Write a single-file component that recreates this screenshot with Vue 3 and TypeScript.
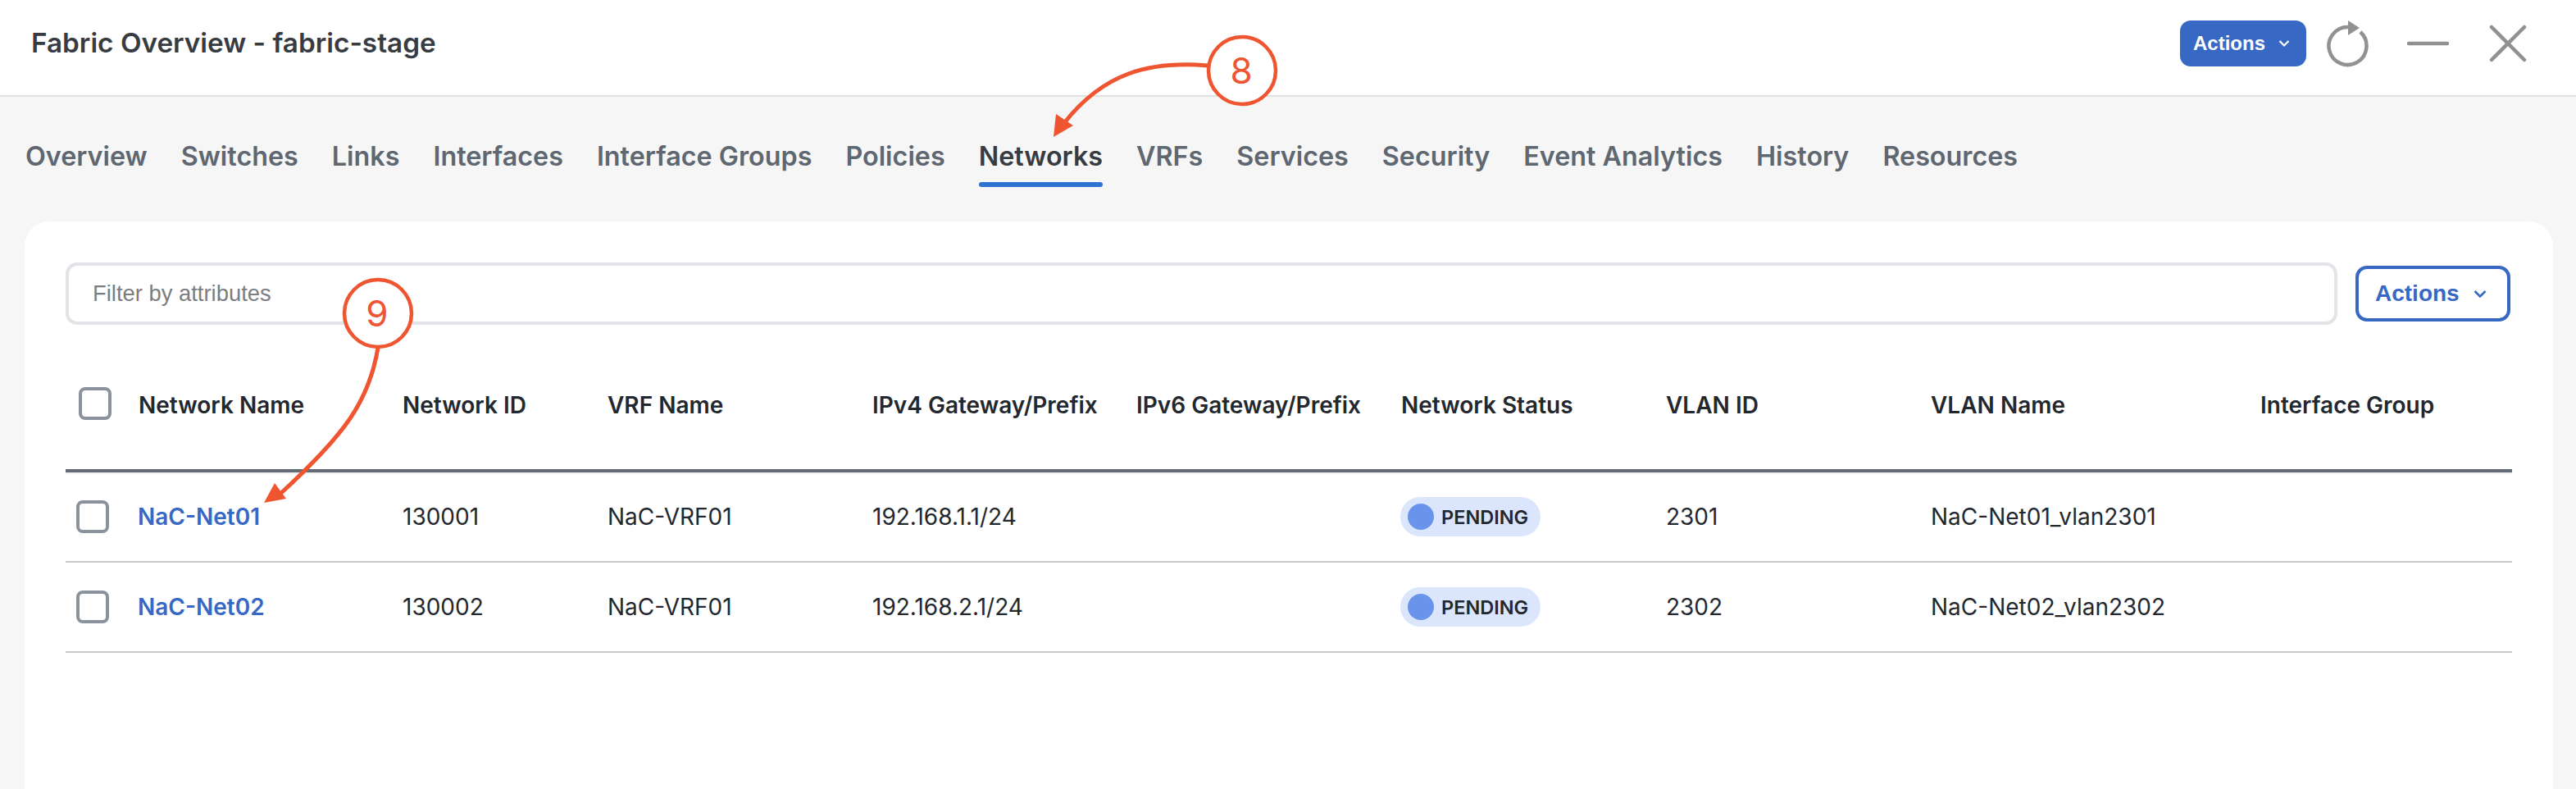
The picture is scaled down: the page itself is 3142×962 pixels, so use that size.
<script setup lang="ts">
const tabs: string[] = ['Overview','Switches','Links','Interfaces','Interface Groups','Policies','Networks','VRFs','Services','Security','Event Analytics','History','Resources']
const columns: string[] = ['Network Name','Network ID','VRF Name','IPv4 Gateway/Prefix','IPv6 Gateway/Prefix','Network Status','VLAN ID','VLAN Name','Interface Group']
interface Row { name: string; id: string; vrf: string; ipv4: string; vlan: string; vlanName: string }
const rows: Row[] = [
  { name: 'NaC-Net01', id: '130001', vrf: 'NaC-VRF01', ipv4: '192.168.1.1/24', vlan: '2301', vlanName: 'NaC-Net01_vlan2301' },
  { name: 'NaC-Net02', id: '130002', vrf: 'NaC-VRF01', ipv4: '192.168.2.1/24', vlan: '2302', vlanName: 'NaC-Net02_vlan2302' },
]
</script>

<template>
  <div class="page">
    <header class="top">
      <h1 class="title">Fabric Overview - fabric-stage</h1>
      <div class="top-tools">
        <button class="btn-solid">Actions
          <svg class="chev" width="14" height="10" viewBox="0 0 14 10"><path d="M1.5 2 L7 7.5 L12.5 2" fill="none" stroke="currentColor" stroke-width="2.2"/></svg>
        </button>
        <svg class="refresh" width="54" height="58" viewBox="0 0 54 58">
          <path d="M27 8 A23 23 0 1 0 42 14" fill="none" stroke="#919191" stroke-width="4.5"/>
          <path d="M27 0 L41 9 L27 18 Z" fill="#919191"/>
        </svg>
        <svg class="minimize" width="51" height="6" viewBox="0 0 51 6"><path d="M2 3 H49" stroke="#919191" stroke-width="4.5" stroke-linecap="round"/></svg>
        <svg class="close" width="46" height="46" viewBox="0 0 46 46"><path d="M3 3 L43 43 M43 3 L3 43" stroke="#919191" stroke-width="4.5" stroke-linecap="round"/></svg>
      </div>
    </header>

    <nav class="tabs">
      <div v-for="t in tabs" :key="t" class="tab" :class="{ active: t === 'Networks' }">{{ t }}</div>
    </nav>

    <main class="card">
      <div class="filter-row">
        <div class="filter">Filter by attributes</div>
        <button class="btn-outline">Actions
          <svg class="chev2" width="16" height="11" viewBox="0 0 16 11"><path d="M1.5 2 L8 8.5 L14.5 2" fill="none" stroke="currentColor" stroke-width="2.6"/></svg>
        </button>
      </div>

      <div class="grid head">
        <span class="check"></span>
        <span v-for="c in columns" :key="c">{{ c }}</span>
      </div>
      <div v-for="r in rows" :key="r.name" class="grid row">
        <span class="check shifted"></span>
        <a class="link">{{ r.name }}</a>
        <span>{{ r.id }}</span>
        <span>{{ r.vrf }}</span>
        <span>{{ r.ipv4 }}</span>
        <span></span>
        <span class="pill"><i class="dot"></i>PENDING</span>
        <span>{{ r.vlan }}</span>
        <span>{{ r.vlanName }}</span>
        <span></span>
      </div>
    </main>

    <svg class="annot" width="3142" height="962" viewBox="0 0 3142 962">
      <g fill="none" stroke="#ee5530" stroke-width="5">
        <path d="M1473 80 C1400 74 1345 90 1298 150"/>
        <path d="M461 424 C450 490 420 530 342 602"/>
      </g>
      <g fill="#ffffff" stroke="#ee5530" stroke-width="4.5">
        <circle cx="1515" cy="86" r="41"/>
        <circle cx="461" cy="382" r="41"/>
      </g>
      <g fill="#ee5530">
        <polygon points="1288,139 1309,153 1285,167"/>
        <polygon points="335,589 349,608 322,613"/>
      </g>
      <g fill="#ee5530" font-family="Inter, sans-serif" font-size="44" text-anchor="middle">
        <text x="1514" y="102">8</text>
        <text x="460" y="398">9</text>
      </g>
    </svg>
  </div>
</template>

<style>
html, body { margin: 0; background: #f6f6f7; }
</style>

<style scoped>
.page {
  position: relative;
  width: 3142px;
  height: 962px;
  overflow: hidden;
  background: #f6f6f7;
  font-family: Inter, sans-serif;
  display: flex;
  flex-direction: column;
}
.top {
  height: 116px;
  flex: none;
  background: #fff;
  border-bottom: 2px solid #e1e1e1;
  display: flex;
  align-items: center;
  justify-content: space-between;
  padding-left: 38px;
}
.title {
  margin: 0;
  font-size: 33.3px;
  font-weight: 600;
  color: #373c42;
  line-height: 1;
  position: relative;
  top: -5px;
}
.top-tools {
  display: flex;
  align-items: flex-start;
  height: 116px;
  padding-top: 25px;
  box-sizing: border-box;
  padding-right: 60px;
}
.btn-solid {
  width: 154px;
  height: 56px;
  background: #3668c4;
  color: #fff;
  border: none;
  border-radius: 13px;
  font: bold 24px "Liberation Sans", sans-serif;
  padding: 0 0 0 16px;
  display: flex;
  align-items: center;
  gap: 16px;
}
.refresh { margin-left: 24px; margin-top: 0; }
.minimize { margin-left: 45px; margin-top: 25px; }
.close { margin-left: 49px; margin-top: 5px; }
.tabs {
  flex: none;
  display: flex;
  gap: 41px;
  padding: 55px 0 0 31px;
  height: 55px;
  margin-bottom: 42px;
}
.tab {
  position: relative;
  font-size: 32.3px;
  font-weight: 600;
  line-height: 36px;
  color: #5f6771;
}
.tab.active { color: #373c42; }
.tab.active::after {
  content: '';
  position: absolute;
  left: 0;
  right: 0;
  top: 49px;
  height: 6px;
  border-radius: 3px;
  background: #2f72d0;
}
.card {
  flex: 1;
  margin: 0 28px 0 30px;
  background: #fff;
  border-radius: 30px 30px 0 0;
  padding: 50px 50px 0 50px;
}
.filter-row {
  display: flex;
  align-items: center;
  gap: 22px;
  margin-right: 2px;
}
.filter {
  flex: 1;
  height: 76px;
  box-sizing: border-box;
  border: 4px solid #e3e4e8;
  border-radius: 14px;
  padding-left: 29px;
  display: flex;
  align-items: center;
  font: 27.4px "Liberation Sans", sans-serif;
  color: #7a7d81;
}
.btn-outline {
  width: 189px;
  height: 68px;
  box-sizing: border-box;
  background: #fff;
  border: 4px solid #3668c4;
  border-radius: 14px;
  color: #3668c4;
  font: bold 28px "Liberation Sans", sans-serif;
  padding: 0 0 0 20px;
  display: flex;
  align-items: center;
  gap: 17px;
}
.grid {
  display: grid;
  grid-template-columns: 89px 322px 250px 323px 322px 323px 323px 323px 402px 1fr;
  align-items: center;
  font-size: 28px;
  color: #23272e;
}
.head {
  box-sizing: border-box;
  height: 180px;
  padding-top: 20px;
  font-weight: 600;
  border-bottom: 4px solid #636b75;
  box-shadow: 0 2px 0 #f0f0f1;
}
.row {
  box-sizing: border-box;
  height: 110px;
  font-weight: 400;
  border-bottom: 2px solid #c9c9c9;
}
.check {
  width: 40px;
  height: 40px;
  box-sizing: border-box;
  border: 4px solid #8a929c;
  border-radius: 8px;
  margin-left: 16px;
}
.head .check { margin-top: -4px; }
.check.shifted { margin-left: 13px; }
.link { color: #3668c4; font-weight: 600; margin-left: -1px; }
.pill {
  justify-self: start;
  height: 48px;
  width: 171px;
  box-sizing: border-box;
  margin-left: -1px;
  padding-left: 9px;
  border-radius: 24px;
  background: #dbe6fc;
  display: flex;
  align-items: center;
  gap: 9px;
  font-size: 23.5px;
  font-weight: 600;
}
.dot {
  width: 32px;
  height: 32px;
  border-radius: 50%;
  background: #6a94ec;
}
.annot {
  position: absolute;
  left: 0;
  top: 0;
  pointer-events: none;
}
</style>
